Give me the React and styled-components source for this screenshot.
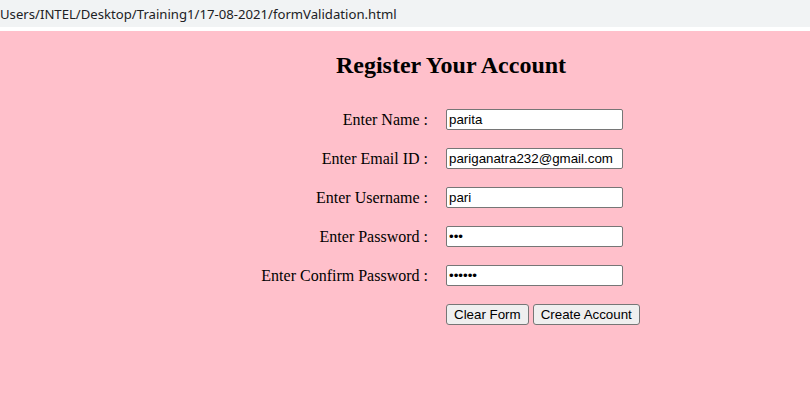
import React from "react";
import styled, { createGlobalStyle } from "styled-components";

const Global = createGlobalStyle`
  html, body { margin: 0; padding: 0; background: #ffffff; }
  body { width: 810px; height: 401px; overflow: hidden; }
`;

const AddressBar = styled.div`
  height: 27px;
  background: #f1f3f4;
  display: flex;
  align-items: center;
  font-family: "Noto Sans", "Open Sans", sans-serif;
  font-size: 13.15px;
  color: #202124;
  white-space: nowrap;
  overflow: hidden;
`;

const Gap = styled.div`
  height: 4px;
  background: #ffffff;
`;

const Page = styled.main`
  background: #ffc0cb;
  height: 370px;
  font-family: "Liberation Serif", "Times New Roman", serif;
  color: #000;
  padding-top: 1px;
  box-sizing: border-box;
`;

const Wrapper = styled.div`
  width: 386px;
  margin-left: 258px;
`;

const Heading = styled.h2`
  margin: 20px 0 0;
  font-size: 24px;
  font-weight: bold;
  text-align: center;
  line-height: 27px;
`;

const Form = styled.form`
  margin-top: 30px;
  display: grid;
  grid-template-columns: 172px auto;
  column-gap: 16px;
  row-gap: 18px;
  align-items: center;
  justify-content: start;
`;

const Label = styled.label`
  font-size: 16px;
  text-align: right;
  line-height: 21px;
  padding-right: 2px;
  white-space: nowrap;
`;

const Input = styled.input`
  box-sizing: border-box;
  width: 177px;
  height: 21px;
  margin: 0;
  padding: 1px 2px;
  border: 1px solid #767676;
  border-radius: 2px;
  background: #fff;
  font-family: "Liberation Sans", Arial, sans-serif;
  font-size: 13.33px;
  color: #000;
  outline: none;
`;

const Buttons = styled.div`
  grid-column: 2;
  display: flex;
  gap: 4px;
`;

const Button = styled.button`
  box-sizing: border-box;
  height: 21px;
  padding: 1px 7px;
  margin: 0;
  border: 1px solid #767676;
  border-radius: 3px;
  background: #efefef;
  font-family: "Liberation Sans", Arial, sans-serif;
  font-size: 13.33px;
  color: #000;
  cursor: pointer;
`;

const fields = [
  { label: "Enter Name :", type: "text", value: "parita" },
  { label: "Enter Email ID :", type: "text", value: "pariganatra232@gmail.com" },
  { label: "Enter Username :", type: "text", value: "pari" },
  { label: "Enter Password :", type: "password", value: "pri" },
  { label: "Enter Confirm Password :", type: "password", value: "parita" },
];

export default function App() {
  return (
    <>
      <Global />
      <AddressBar>Users/INTEL/Desktop/Training1/17-08-2021/formValidation.html</AddressBar>
      <Gap />
      <Page>
        <Wrapper>
          <Heading>Register Your Account</Heading>
          <Form onSubmit={(e) => e.preventDefault()}>
            {fields.map((f) => (
              <React.Fragment key={f.label}>
                <Label>{f.label}</Label>
                <Input type={f.type} defaultValue={f.value} />
              </React.Fragment>
            ))}
            <Buttons>
              <Button type="reset">Clear Form</Button>
              <Button type="submit">Create Account</Button>
            </Buttons>
          </Form>
        </Wrapper>
      </Page>
    </>
  );
}
